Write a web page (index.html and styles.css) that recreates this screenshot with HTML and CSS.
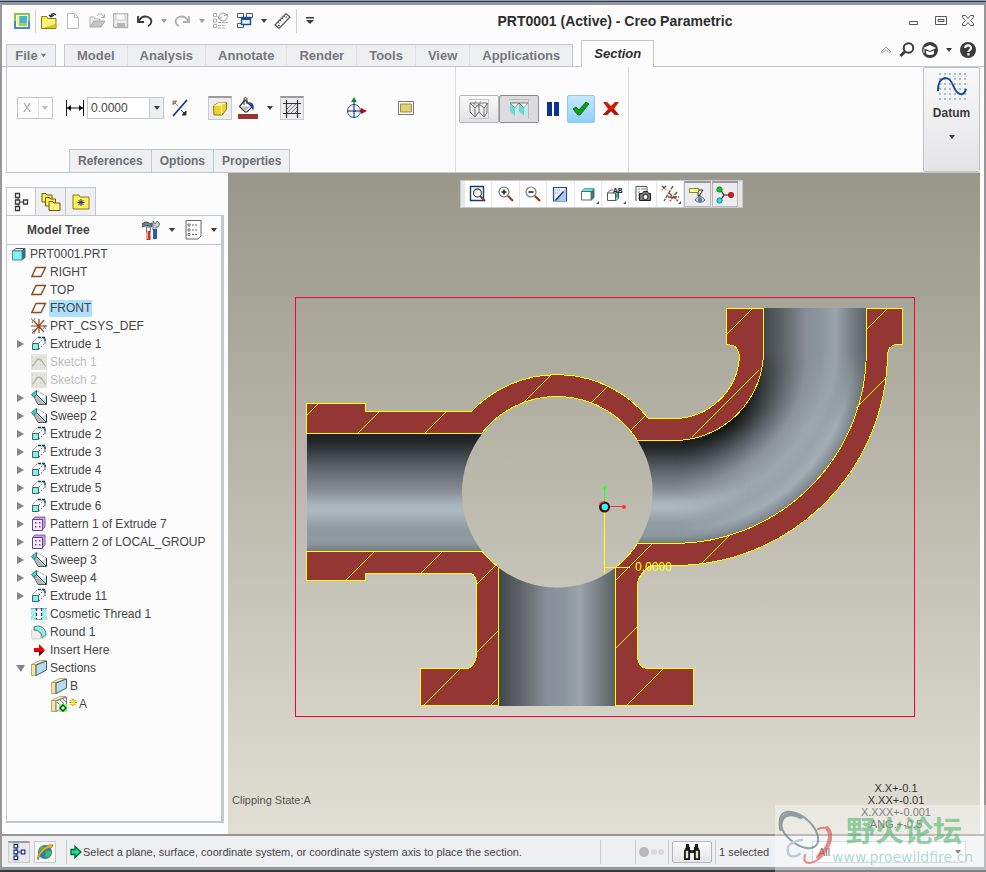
FILE: index.html
```html
<!DOCTYPE html>
<html lang="en">
<head>
<meta charset="utf-8">
<title>PRT0001 (Active) - Creo Parametric</title>
<link rel="stylesheet" href="styles.css">
</head>
<body>
<svg class="defs" aria-hidden="true">
  <symbol id="i-caret" viewBox="0 0 8 8"><path d="M1 2h6L4 6z" fill="currentColor"/></symbol>
  <symbol id="i-plane" viewBox="0 0 16 16"><path d="M5 3.500h9.500L10 12.500H.8z" fill="none" stroke="#8b4a1c" stroke-width="1.400"/></symbol>
  <symbol id="i-extrude" viewBox="0 0 16 16"><path d="M1.500 7.500h6v6h-6z" fill="#7df3f3" stroke="#4b5b60"/><path d="M1.500 6.500l5-5M8 13l6-6M8 7l5-5" stroke="#6b7075" stroke-dasharray="1.500 1.200" fill="none"/><path d="M7 1.500h7v6" fill="none" stroke="#234" stroke-width="1.500" stroke-dasharray="3 1"/><path d="M8 2.500h4" stroke="#5ee"/></symbol>
  <symbol id="i-sketch" viewBox="0 0 16 16"><path d="M0 0h16v16H0z" fill="#e4e4e0"/><path d="M1 3h14M1 7h14M1 11h14M1 14h14" stroke="#c9c9bd" stroke-dasharray="1 3"/><path d="M1 12c3 0 3-7 7-7s4 7 7 7" fill="none" stroke="#b5b5a0" stroke-width="1.300"/></symbol>
  <symbol id="i-sweep" viewBox="0 0 16 16"><path d="M5.500 3l10-.5v12l-10-9z" fill="#fff"/><path d="M3 6l2-1 10 10H8z" fill="#b4b8ba"/><path d="M10 10l5-4v8z" fill="#b5f0f0"/><path d="M6 5l9.500 9.500V6" fill="none" stroke="#333"/><path d="M6 1l9.500 5" fill="none" stroke="#999" stroke-dasharray="2 1"/><path d="M3 7l4 7.500h8.500" fill="none" stroke="#555"/><path d="M.5 4.500L5.500.5V5L2.500 7z" fill="#35dede" stroke="#164b50" stroke-width=".8"/></symbol>
  <symbol id="i-pattern" viewBox="0 0 16 16"><path d="M1 4l3-3h10v10l-3 3z" fill="#c9a0ea" stroke="#7040a0" stroke-width=".8"/><path d="M1.500 3.500h10v11h-10z" fill="#f6eeff" stroke="#654085"/><path d="M4 6h1.500v1.500H4zM8 6h1.500v1.500H8zM4 10h1.500v1.500H4zM8 10h1.500v1.500H8z" fill="#8a2bd0"/></symbol>
  <symbol id="i-thread" viewBox="0 0 16 16"><path d="M0 2h5v12H0zM11 2h5v12h-5z" fill="#8de4ea"/><path d="M0 6l4-4M0 10l5-6M1 14l4-6M11 6l4-4M11 11l5-6M12 14l4-6" stroke="#e9ffff"/><path d="M0 2.500h16" stroke="#8ab"/><path d="M5.500 2v12M10.500 2v12" stroke="#1b2f7a" stroke-dasharray="3 2" stroke-width="1.200"/><path d="M5 13.500h6" stroke="#89a"/></symbol>
  <symbol id="i-round" viewBox="0 0 16 16"><path d="M0 6l6 1 4 3v5H1z" fill="#f0f0e6" stroke="#bbb" stroke-width=".6"/><path d="M3 3c6-3 12 1 12 8l-4 3c0-5-3-8-8-8z" fill="#8ff0f0" stroke="#356" stroke-width=".8"/><path d="M11 14l4-3v2l-4 2z" fill="#ccc9b8"/></symbol>
  <symbol id="i-insert" viewBox="0 0 16 16"><path d="M3 6h5V2l6 6-6 6v-4H3z" fill="#f00000"/><path d="M3 9h10.500L8 14v-4H3z" fill="#8d0000"/></symbol>
  <symbol id="i-section" viewBox="0 0 16 16"><path d="M.5 4.500L9 .5h6L5 4.500z" fill="#fffbd0" stroke="#aa9a50" stroke-width=".8"/><path d="M.5 4.500H5v11H.5z" fill="#f4e6a0" stroke="#a89850" stroke-width=".8"/><path d="M5 5l10.500-4v9L5 15.500z" fill="#b5dcf0" stroke="#3f5e6e"/></symbol>
  <symbol id="i-section-active" viewBox="0 0 16 16"><path d="M.5 4.500L9 .5h6L5 4.500z" fill="#fffbd0" stroke="#aa9a50" stroke-width=".8"/><path d="M.5 4.500H5v11H.5z" fill="#f4e6a0" stroke="#a89850" stroke-width=".8"/><path d="M5 5l10.500-4v9L5 15.500z" fill="#fff" stroke="#777"/><path d="M6 6l7 7M9 4l6 6M12 3l3 3" stroke="#777"/><path d="M8 8h8v8H8z" fill="#8f6"/><path d="M12 9l3 3-3 3-3-3z" fill="#dfd" stroke="#041" stroke-width="1.400"/></symbol>
  <symbol id="i-tree" viewBox="0 0 16 20"><path d="M5 4v12M5 10h6" stroke="currentColor" fill="none"/><path d="M2.500 1.500h4v4h-4zM2.500 8h4v4h-4zM2.500 14.500h4v4h-4zM10.500 8h4v4h-4z" fill="#fff" stroke="currentColor" stroke-width="1.300"/></symbol>
  <symbol id="i-csys" viewBox="0 0 16 16"><path d="M0 8h16M3 3l10 11M13 2L3 14M8 1v14" stroke="#8b4a1c" fill="none" stroke-width="1.200"/><path d="M0 0l2 3M4 0L1 5M12 7l3 4M15 7l-3 4M1 12h3l-3 3h3" stroke="#555" fill="none" stroke-width=".8"/></symbol>
</svg>

<div class="window">
  <header class="titlebar">
    <nav class="quick" aria-label="Quick access">
      <button class="qa" aria-label="Application menu"><svg width="16" height="16" viewBox="0 0 16 16"><path d="M0 0h16v16H0z" fill="#86c64f"/><path d="M0 8h16v8H0z" fill="#4a8ac8"/><path d="M2 2h12v12H2z" fill="#fff"/><path d="M3 3h10v10H3z" fill="#a9cf43"/><path d="M6 3h7v7H6z" fill="#40b5d8"/><path d="M3 3h2v10H3z" fill="#e6ef9b"/></svg></button>
      <span class="sep"></span>
      <button class="qa" aria-label="Working directory"><svg width="18" height="18" viewBox="0 0 18 18"><path d="M1.500 6V4.500h5L8 6.500h8v10H1.500z" fill="#f6ea3c" stroke="#8d7a1e"/><path d="M2 7h13v9H2z" fill="#fff47a"/><path d="M15 14l1 2H3l12-4z" fill="#d8c41e"/><path d="M16 3c-2-2-4-2-5 1M9 3l2 2 3-2" fill="none" stroke="#222" stroke-width="1.200"/></svg></button>
      <button class="qa" aria-label="New"><svg width="14" height="16" viewBox="0 0 14 16"><path d="M1.500.5h7l4 4v11h-11z" fill="#fff" stroke="#bbb"/><path d="M8.500.5v4h4" fill="none" stroke="#bbb"/></svg></button>
      <button class="qa" aria-label="Open"><svg width="17" height="16" viewBox="0 0 17 16"><path d="M1 14V4h4l1 2h5v3" fill="#eee" stroke="#b5b5b5"/><path d="M1 14l4-6h11l-4 6z" fill="#c6c6c6" stroke="#aaa"/><path d="M8 3c2-3 5-3 7 1M15.500 1v3.500H12" fill="none" stroke="#aaa"/></svg></button>
      <button class="qa" aria-label="Save"><svg width="16" height="16" viewBox="0 0 16 16"><path d="M.5.5h14v14H2l-1.500-1z" fill="#eee" stroke="#b3b3b3" stroke-width="1.400"/><path d="M3 1h9v6H3z" fill="#fff" stroke="#c5c5c5"/><path d="M4 10h8v4H4z" fill="#b5b5b5"/></svg></button>
      <button class="qa" aria-label="Undo"><svg width="18" height="14" viewBox="0 0 18 14"><path d="M2 2v6h6M2.500 7.500C5 3 9 2 12 3c5 2 4 7 0 9" fill="none" stroke="#3b3b3b" stroke-width="1.800"/></svg></button>
      <button class="qa-drop dim" aria-label="Undo list"><svg width="8" height="8"><use href="#i-caret"/></svg></button>
      <button class="qa" aria-label="Redo"><svg width="18" height="14" viewBox="0 0 18 14"><path d="M15 2v6H9M14.500 7.500C12 3 8 2 5 3c-5 2-4 7 0 9" fill="none" stroke="#b0b0b0" stroke-width="1.800"/></svg></button>
      <button class="qa-drop dim" aria-label="Redo list"><svg width="8" height="8"><use href="#i-caret"/></svg></button>
      <button class="qa" aria-label="Regenerate"><svg width="18" height="18" viewBox="0 0 18 18"><path d="M1.500 1.500h3v3h-3zM1.500 7h3v3h-3zM1.500 12.500h3v3h-3z" fill="#fff" stroke="#aaa"/><path d="M6 10.500h10M6 13.500h8M6 16h9" stroke="#aaa" stroke-dasharray="3 1"/><path d="M7 5c0-5 7-5 8-1M15 5c0 5-7 5-8 1M6 4l1 3 3-2M16 5l-1-3-3 2" fill="none" stroke="#999"/></svg></button>
      <button class="qa" aria-label="Windows"><svg width="16" height="16" viewBox="0 0 16 16"><path d="M.5.5h6v4h-6zM9.500.5h6v4h-6zM.5 10.500h6v4h-6z" fill="#fff" stroke="#555"/><path d="M4.500 4.500h9v7h-9z" fill="#e8f0ff" stroke="#1d4a9a" stroke-width="1.400"/><path d="M4 5h10v2H4z" fill="#1d4a9a"/></svg></button>
      <button class="qa-drop" aria-label="Window list"><svg width="8" height="8"><use href="#i-caret"/></svg></button>
      <button class="qa" aria-label="Measure"><svg width="18" height="18" viewBox="0 0 18 18"><path d="M1 13L12 1.500l4 3.500L5 16.500z" fill="#fff" stroke="#555" stroke-width="1.200"/><path d="M4 10l1.500 1.500M6 8l1.500 1.500M8 6l1.500 1.500M10 4l1.500 1.500" stroke="#555"/><path d="M4 13.500h2M12 5h1" stroke="#777" stroke-width="1.500"/></svg></button>
      <span class="sep"></span>
      <button class="qa" aria-label="Customize"><svg width="8" height="8" viewBox="0 0 8 8"><path d="M0 0h8v1.500H0zM0 3h8L4 7z" fill="#3b3b3b"/></svg></button>
    </nav>
    <h1 class="title">PRT0001 (Active) - Creo Parametric</h1>
    <div class="win-buttons">
      <button aria-label="Minimize"><svg width="12" height="12" viewBox="0 0 12 12"><path d="M1.500 6.500h8v3h-8z" fill="#fff" stroke="#555"/></svg></button>
      <button aria-label="Maximize"><svg width="12" height="12" viewBox="0 0 12 12"><path d="M.5 1.500h11v8H.5z" fill="#fff" stroke="#555"/><path d="M3 4.500h6v2H3z" fill="#fff" stroke="#555"/></svg></button>
      <button aria-label="Close"><svg width="12" height="12" viewBox="0 0 12 12"><path d="M.5.5h3L6 3.500 8.500.5h3v2L8.500 5.500l3 3v2h-3L6 7.500l-2.500 3h-3v-2l3-3-3-3z" fill="#fff" stroke="#555"/></svg></button>
    </div>
  </header>

  <nav class="tabs" aria-label="Ribbon tabs">
    <button class="tab file">File <svg width="7" height="7"><use href="#i-caret"/></svg></button>
    <div class="tab-set">
      <button class="tab">Model</button><button class="tab">Analysis</button><button class="tab">Annotate</button><button class="tab">Render</button><button class="tab">Tools</button><button class="tab">View</button><button class="tab">Applications</button>
    </div>
    <button class="tab active">Section</button>
    <div class="tab-tools">
      <button aria-label="Collapse ribbon"><svg width="12" height="8" viewBox="0 0 12 8"><path d="M1 6l5-5 5 5H8.500L6 3.500 3.500 6z" fill="#fff" stroke="#999"/></svg></button>
      <button aria-label="Search"><svg width="16" height="16" viewBox="0 0 16 16"><circle cx="9.500" cy="6" r="4.800" fill="#fff" stroke="#3b3b3b" stroke-width="2"/><path d="M6 9.500L1.500 14" stroke="#3b3b3b" stroke-width="3"/></svg></button>
      <button aria-label="Learning"><svg width="16" height="16" viewBox="0 0 16 16"><circle cx="8" cy="8" r="8" fill="#3b3b3b"/><path d="M1 6l7-3 6 3-6 3z" fill="#fff"/><path d="M4 8.500v3c2 2 6 2 8 0v-3L8 10z" fill="#fff"/><path d="M2 7v4" stroke="#fff"/></svg></button>
      <button aria-label="Learning menu"><svg width="8" height="8"><use href="#i-caret"/></svg></button>
      <button aria-label="Help"><svg width="16" height="16" viewBox="0 0 16 16"><circle cx="8" cy="8" r="8" fill="#3b3b3b"/><path d="M5.200 6c0-3.500 5.800-3.500 5.800 0 0 2-2.500 2-2.500 4" fill="none" stroke="#fff" stroke-width="2.200"/><path d="M7.300 11.200h2.300v2.200H7.300z" fill="#fff"/></svg></button>
    </div>
  </nav>

  <section class="ribbon" aria-label="Section dashboard">
    <div class="group settings">
      <div class="tools">
        <label class="combo axis"><select disabled aria-label="Axis"><option>X</option></select><svg width="8" height="8"><use href="#i-caret"/></svg></label>
        <div class="offset">
          <svg width="18" height="18" viewBox="0 0 18 18"><path d="M.5 1v16M17.500 1v16M1 9h16" stroke="#111"/><path d="M1 9l4-3v6zM17 9l-4-3v6z" fill="#111"/></svg>
          <span class="combo value"><input type="text" value="0.0000" aria-label="Offset"><button aria-label="Recent offsets"><svg width="8" height="8"><use href="#i-caret"/></svg></button></span>
        </div>
        <button class="tool" aria-label="Flip"><svg width="18" height="18" viewBox="0 0 18 18"><path d="M2 17L16 1" stroke="#0b2f86" stroke-width="1.600"/><path d="M2 2h4L2 6zM3 3l4 4" fill="#8a8a75" stroke="#8a8a75"/><path d="M15 16h-4l4-4zM14 15l-4-4" fill="#333" stroke="#333"/></svg></button>
        <button class="tool pressed cap" aria-label="Cap"><svg width="16" height="16" viewBox="0 0 16 16"><path d="M1.500 5l5-3.500h8v7L10 14H2z" fill="#f4cf28" stroke="#8c7420" stroke-linejoin="round"/><path d="M2 5h7l5-3.500H6.500z" fill="#fff3a0"/><path d="M9.500 5v8.500" stroke="#fffbd0"/></svg></button>
        <button class="tool paint" aria-label="Hatch color"><svg width="20" height="22" viewBox="0 0 20 22"><path d="M7 3l7 7-5 5H7L1.500 9.500z" fill="#fff" stroke="#333" stroke-width="1.200"/><path d="M3 9.500h9L8 14z" fill="#bbb"/><path d="M6 8V2c0-2 3-2 3 0v5" fill="none" stroke="#333"/><path d="M10 5c5 0 7 4 5 9-1-4-2-6-5-9z" fill="#0c3bd0"/><path d="M0 17h20v5H0z" fill="#963232"/></svg></button>
        <button class="tool drop" aria-label="Hatch colors"><svg width="8" height="8"><use href="#i-caret"/></svg></button>
        <button class="tool pressed" aria-label="Show hatching"><svg width="18" height="18" viewBox="0 0 18 18"><path d="M4 4h10v9H4z" fill="#e9e9e9"/><path d="M4 9l5-5M4 13l9-9M8 13l6-6M12 13l2-2" stroke="#777"/><path d="M3.500 0v18M14.500 0v18M0 3.500h18M0 13.500h18" stroke="#333" stroke-width="1.200"/></svg></button>
        <button class="tool free" aria-label="Enable free positioning"><svg width="22" height="22" viewBox="0 0 22 22"><circle cx="8" cy="14" r="6.500" fill="#eef3ff" stroke="#2a50c8"/><path d="M1 14h16M8 5v16" stroke="#222"/><path d="M8 0l3 5H5z" fill="#128a2c"/><path d="M21 14l-6-3v6z" fill="#9d1010"/><path d="M14 14h4" stroke="#b01010" stroke-width="2"/><path d="M7 13h3v2H7z" fill="#2a50c8"/></svg></button>
        <button class="tool" aria-label="2D view window"><svg width="16" height="14" viewBox="0 0 16 14"><path d="M.5.500h15v13H.5z" fill="#fff" stroke="#777"/><path d="M2.500 3h11v8h-11z" fill="#e0cf78" stroke="#a08d38"/></svg></button>
      </div>
      <div class="panels"><button>References</button><button>Options</button><button>Properties</button></div>
    </div>
    <div class="group confirm">
      <div class="pair">
        <button class="big" aria-label="No preview"><svg width="20" height="20" viewBox="0 0 20 20"><path d="M0 .5h19.500V20M0 19.500h20" fill="none" stroke="#c8c8c8"/><path d="M1 4h17M1 4l5 5v9M1 4v9l5 5 4-5V5L6 9M10 5l5 4 4-5M10 13l5 5V9M15 18l3-4V4" fill="none" stroke="#555" stroke-width=".8"/><path d="M4 4l7 5M7 2l-3 5M12 2l-3 6" fill="none" stroke="#888" stroke-width=".7"/></svg></button>
        <button class="big down" aria-label="Preview"><svg width="20" height="20" viewBox="0 0 20 20"><path d="M0 .5h19.500V20" fill="none" stroke="#bbb"/><path d="M1 4h18l-4 5-5-5-4 5z" fill="#fff" stroke="#555" stroke-width=".8"/><path d="M1 4l5 5v8l-5-5zM10 5l5 4v8l-5-5z" fill="#6fd8d4"/><path d="M6 9l4-4v7l-4 5zM15 9l4-5v8l-4 5z" fill="#b6f2ef"/></svg></button>
      </div>
      <button class="plain" aria-label="Pause"><svg width="12" height="14" viewBox="0 0 12 14"><path d="M0 0h5v14H0zM7 0h5v14H7z" fill="#0c3391"/></svg></button>
      <button class="ok" aria-label="OK"><svg width="18" height="16" viewBox="0 0 18 16"><path d="M1 8l3-2 3 3 7-8 3 2L8 14H6z" fill="#0aa00a" stroke="#046004" stroke-width=".8"/></svg></button>
      <button class="plain" aria-label="Cancel"><svg width="16" height="16" viewBox="0 0 16 16"><path d="M0 1h4l4 4 4-4h4l-5 7 5 6h-4l-4-4-4 4H0l5-6z" fill="#d11b05"/><path d="M11 8l5 6h-4l-4-4-4 4H0l4-4 4-1z" fill="#b01500"/></svg></button>
    </div>
    <button class="datum"><svg width="30" height="28" viewBox="0 0 30 28"><path d="M2 1h28M2 6h28M2 11h28M2 16h28M2 21h28M2 26h28" stroke="#a9bcc8" stroke-width="2" stroke-dasharray="2 3"/><path d="M1 18C1 2 12 2 16 12c4 11 11 12 13 4" fill="none" stroke="#174a9c" stroke-width="2"/></svg><span>Datum</span><svg width="8" height="8"><use href="#i-caret"/></svg></button>
  </section>

  <main class="workspace">
    <aside class="sidebar">
      <div class="side-tabs">
        <button class="current" aria-label="Model tree"><svg width="16" height="20"><use href="#i-tree"/></svg></button>
        <button aria-label="Folder browser"><svg width="20" height="20" viewBox="0 0 20 20"><path d="M1 3V1.500h4L6 3h5v7H1z" fill="#ffef56" stroke="#6b5c14"/><path d="M4.500 7V5.500h4L9.500 7h5v7h-10z" fill="#ffef56" stroke="#6b5c14"/><path d="M8 11V9.500h4l1 1.500h6v7.500H8z" fill="#fff27c" stroke="#6b5c14"/></svg></button>
        <button aria-label="Favorites"><svg width="18" height="16" viewBox="0 0 18 16"><path d="M1 3V1h6l1 2h9v12H1z" fill="#fff056" stroke="#8a7a20"/><path d="M9 5v7M5.500 8.500h7M6.500 6l5 5M11.500 6l-5 5" stroke="#14308a"/></svg></button>
      </div>
      <div class="panel">
        <div class="panel-head">
          <h2>Model Tree</h2>
          <button aria-label="Settings"><svg width="18" height="20" viewBox="0 0 18 20"><path d="M0 4c3-3 7-2 8 0l2-1v4L8 6H4c-2 0-3 1-4 1z" fill="#5f8b98" stroke="#234" stroke-width=".8"/><path d="M4.500 7h4v5h-4z" fill="#eee" stroke="#777"/><path d="M4.500 11h4v9h-4z" fill="#c43a20"/><path d="M5 11h1v8H5z" fill="#f0a890"/><path d="M11 1l2 3 2-3 3 3-2 3h-2v3h-3V6z" fill="#ccd0d3" stroke="#555" stroke-width=".8"/><path d="M11 9h4v10h-4z" fill="#265cb5"/></svg></button>
          <button class="narrow" aria-label="Settings menu"><svg width="8" height="8"><use href="#i-caret"/></svg></button>
          <button aria-label="Show"><svg width="17" height="20" viewBox="0 0 17 20"><path d="M1 .5h15v15.500l-3 3H1z" fill="#fff" stroke="#666"/><path d="M7 5h6M7 10h6M7 14.500h6" stroke="#666" stroke-dasharray="2 1"/><path d="M3 4h2v2H3zM3 9h2v2H3zM3 13.500h2v2H3z" fill="#fff" stroke="#555" stroke-width=".8"/></svg></button>
          <button class="narrow" aria-label="Show menu"><svg width="8" height="8"><use href="#i-caret"/></svg></button>
        </div>
        <ul class="tree">
          <li class="root"><svg width="16" height="16" viewBox="0 0 16 16"><path d="M1.500 5L5 2.500h9L11 5z" fill="#e5ffff" stroke="#456"/><path d="M11 5l3-2.500v9L11 14z" fill="#277a85" stroke="#456"/><path d="M1.500 5H11v9H1.500z" fill="#7df3f3" stroke="#5a8a90"/></svg><span>PRT0001.PRT</span></li>
          <li><i></i><svg><use href="#i-plane"/></svg><span>RIGHT</span></li>
          <li><i></i><svg><use href="#i-plane"/></svg><span>TOP</span></li>
          <li class="selected"><i></i><svg><use href="#i-plane"/></svg><span>FRONT</span></li>
          <li><i></i><svg><use href="#i-csys"/></svg><span>PRT_CSYS_DEF</span></li>
          <li><i class="closed"></i><svg><use href="#i-extrude"/></svg><span>Extrude 1</span></li>
          <li class="off"><i></i><svg><use href="#i-sketch"/></svg><span>Sketch 1</span></li>
          <li class="off"><i></i><svg><use href="#i-sketch"/></svg><span>Sketch 2</span></li>
          <li><i class="closed"></i><svg><use href="#i-sweep"/></svg><span>Sweep 1</span></li>
          <li><i class="closed"></i><svg><use href="#i-sweep"/></svg><span>Sweep 2</span></li>
          <li><i class="closed"></i><svg><use href="#i-extrude"/></svg><span>Extrude 2</span></li>
          <li><i class="closed"></i><svg><use href="#i-extrude"/></svg><span>Extrude 3</span></li>
          <li><i class="closed"></i><svg><use href="#i-extrude"/></svg><span>Extrude 4</span></li>
          <li><i class="closed"></i><svg><use href="#i-extrude"/></svg><span>Extrude 5</span></li>
          <li><i class="closed"></i><svg><use href="#i-extrude"/></svg><span>Extrude 6</span></li>
          <li><i class="closed"></i><svg><use href="#i-pattern"/></svg><span>Pattern 1 of Extrude 7</span></li>
          <li><i class="closed"></i><svg><use href="#i-pattern"/></svg><span>Pattern 2 of LOCAL_GROUP</span></li>
          <li><i class="closed"></i><svg><use href="#i-sweep"/></svg><span>Sweep 3</span></li>
          <li><i class="closed"></i><svg><use href="#i-sweep"/></svg><span>Sweep 4</span></li>
          <li><i class="closed"></i><svg><use href="#i-extrude"/></svg><span>Extrude 11</span></li>
          <li><i></i><svg><use href="#i-thread"/></svg><span>Cosmetic Thread 1</span></li>
          <li><i></i><svg><use href="#i-round"/></svg><span>Round 1</span></li>
          <li><i></i><svg><use href="#i-insert"/></svg><span>Insert Here</span></li>
          <li><i class="open"></i><svg><use href="#i-section"/></svg><span>Sections</span></li>
          <li class="deep"><svg><use href="#i-section"/></svg><span>B</span></li>
          <li class="deep"><svg><use href="#i-section-active"/></svg><svg class="spark" viewBox="0 0 8 16"><path d="M4 3v7M.5 6.500h7M1.500 4l5 5M6.500 4l-5 5" stroke="#776a00"/><path d="M2 4.500h4v4H2z" fill="#fff200"/></svg><span>A</span></li>
        </ul>
      </div>
    </aside>

    <div class="canvas">
      <svg class="model" viewBox="228 173 752 661" role="img" aria-label="Pipe fitting cross-section">
        <defs>
          <linearGradient id="g-h" x1="0" y1="434" x2="0" y2="551" gradientUnits="userSpaceOnUse">
            <stop offset="0" stop-color="#1d2021"/><stop offset=".07" stop-color="#24282a"/><stop offset=".28" stop-color="#5c6269"/><stop offset=".49" stop-color="#888f99"/><stop offset=".6" stop-color="#a9b3bc"/><stop offset=".66" stop-color="#aeb8c0"/><stop offset=".81" stop-color="#8f9aa1"/><stop offset=".93" stop-color="#8d979e"/><stop offset="1" stop-color="#747d83"/>
          </linearGradient>
          <linearGradient id="g-h2" x1="0" y1="441" x2="0" y2="543" gradientUnits="userSpaceOnUse">
            <stop offset="0" stop-color="#1d2021"/><stop offset=".07" stop-color="#24282a"/><stop offset=".28" stop-color="#5c6269"/><stop offset=".49" stop-color="#888f99"/><stop offset=".6" stop-color="#a9b3bc"/><stop offset=".66" stop-color="#aeb8c0"/><stop offset=".81" stop-color="#8f9aa1"/><stop offset=".93" stop-color="#8d979e"/><stop offset="1" stop-color="#747d83"/>
          </linearGradient>
          <linearGradient id="g-v" x1="499" y1="0" x2="615" y2="0" gradientUnits="userSpaceOnUse">
            <stop offset="0" stop-color="#42484a"/><stop offset=".18" stop-color="#5f6368"/><stop offset=".42" stop-color="#898f9a"/><stop offset=".56" stop-color="#8b959d"/><stop offset=".7" stop-color="#9aa4ab"/><stop offset=".85" stop-color="#788187"/><stop offset="1" stop-color="#5b6368"/>
          </linearGradient>
          <linearGradient id="g-v2" x1="764" y1="0" x2="866" y2="0" gradientUnits="userSpaceOnUse">
            <stop offset="0" stop-color="#42484a"/><stop offset=".18" stop-color="#5f6368"/><stop offset=".42" stop-color="#898f9a"/><stop offset=".56" stop-color="#8b959d"/><stop offset=".7" stop-color="#9aa4ab"/><stop offset=".85" stop-color="#788187"/><stop offset="1" stop-color="#5b6368"/>
          </linearGradient>
          <radialGradient id="g-ra" cx="674" cy="351" r="192" gradientUnits="userSpaceOnUse">
            <stop offset=".469" stop-color="#42484a"/><stop offset=".565" stop-color="#5f6368"/><stop offset=".692" stop-color="#898f9a"/><stop offset=".766" stop-color="#8b959d"/><stop offset=".841" stop-color="#9aa4ab"/><stop offset=".92" stop-color="#788187"/><stop offset="1" stop-color="#5b6368"/>
          </radialGradient>
          <radialGradient id="g-rb" cx="674" cy="351" r="192" gradientUnits="userSpaceOnUse">
            <stop offset=".469" stop-color="#1d2021"/><stop offset=".506" stop-color="#24282a"/><stop offset=".618" stop-color="#5c6269"/><stop offset=".729" stop-color="#888f99"/><stop offset=".788" stop-color="#a9b3bc"/><stop offset=".82" stop-color="#aeb8c0"/><stop offset=".9" stop-color="#8f9aa1"/><stop offset=".963" stop-color="#8d979e"/><stop offset="1" stop-color="#747d83"/>
          </radialGradient>
          <radialGradient id="g-rc" cx="674" cy="351" r="192" gradientUnits="userSpaceOnUse">
            <stop offset=".469" stop-color="#080a0b"/><stop offset=".5" stop-color="#202425"/><stop offset=".6" stop-color="#5c6269"/><stop offset=".7" stop-color="#8b949d"/><stop offset=".8" stop-color="#9ca7ae"/><stop offset=".87" stop-color="#98a3ab"/><stop offset=".93" stop-color="#a3adb5"/><stop offset="1" stop-color="#7a8389"/>
          </radialGradient>
          <linearGradient id="m-a" x1="0" y1="425" x2="0" y2="351" gradientUnits="userSpaceOnUse"><stop offset="0" stop-color="#000"/><stop offset="1" stop-color="#fff"/></linearGradient>
          <linearGradient id="m-b" x1="676" y1="0" x2="750" y2="0" gradientUnits="userSpaceOnUse"><stop offset="0" stop-color="#fff"/><stop offset="1" stop-color="#000"/></linearGradient>
          <mask id="mask-a" maskUnits="userSpaceOnUse" x="600" y="300" width="300" height="260"><path d="M600 300h300v260H600z" fill="url(#m-a)"/></mask>
          <mask id="mask-b" maskUnits="userSpaceOnUse" x="600" y="300" width="300" height="260"><path d="M600 300h300v260H600z" fill="url(#m-b)"/></mask>
        </defs>

        <path d="M307 434H482A95.500 95.500 0 0 0 482 551H307z" fill="url(#g-h)"/>
        <path d="M499 568A95.500 95.500 0 0 0 615 568V706H499z" fill="url(#g-v)"/>
        <path d="M764 308h102.500v43H764z" fill="url(#g-v2)"/>
        <path d="M637.500 440.500H674v103h-36.500A95.500 95.500 0 0 0 637.500 440.500z" fill="url(#g-h2)"/>
        <path d="M866.500 351A192.500 192.500 0 0 1 674 543.500V440.500A89.500 89.500 0 0 0 763.500 351z" fill="url(#g-rc)"/>
        <path d="M866.500 351A192.500 192.500 0 0 1 674 543.500V440.500A89.500 89.500 0 0 0 763.500 351z" fill="url(#g-ra)" mask="url(#mask-a)"/>
        <path d="M866.500 351A192.500 192.500 0 0 1 674 543.500V440.500A89.500 89.500 0 0 0 763.500 351z" fill="url(#g-rb)" mask="url(#mask-b)"/>

        <g class="cut">
          <path d="M306.500 403.500h59v8h106A117.500 117.500 0 0 1 648.500 418.500H674A66 66 0 0 0 739.500 357.500Q739 348 733 345.500L726.500 344.500V308.500h37V351A89.500 89.500 0 0 1 674 440.500H637.500A95.500 95.500 0 0 0 481.500 433.500H306.500z"/>
          <path d="M866.500 308.500h36v36h-7Q888 346 887.500 355A213.500 213.500 0 0 1 674 565.500H650.500Q640 573 637.500 582.500V658.500Q639 667 646 668.500H693.500V705.500H615.500V567.500A95.500 95.500 0 0 0 637.500 543.500H674A192.500 192.500 0 0 0 866.500 351z"/>
          <path d="M306.500 551.500h175.500A95.500 95.500 0 0 0 498.500 567.500V705.500H420.500V668.500H468.500Q475 665 476.500 656.500V583.500Q476 576 471.500 573.500H365.500v7h-59z"/>
        </g>
        <g class="hatch">
          <path d="M307 415l12-12M358 433l21-21M425 433l21-21M524 402l27-27M592 402l16-16M630 431l16-16M692 437l67-67M727 334l25-25M867 329l20-20M856 408l29-29M702 563l29-29M616 580l36-36M616 648l21-21M627 705l36-36M346 580l28-28M421 573l21-21M477 584l20-20M477 652l21-21M424 705l36-36M491 705l7-7"/>
        </g>
        <path class="clip" d="M295.500 297.500h619v419h-619z"/>

        <path d="M604.500 511v62M604 567.500h26" stroke="#ff0" fill="none"/>
        <path d="M604.500 503v-15" stroke="#2f3"/><circle cx="604.500" cy="488" r="2" fill="#3f3"/>
        <path d="M609 506.500h15" stroke="#f33"/><circle cx="624" cy="507" r="2" fill="#f33"/>
        <circle cx="604.500" cy="507" r="5.500" fill="#4a0a0c"/><path d="M600 504a5 5 0 0 1 4-2" stroke="#e22" stroke-width="1.500" fill="none"/><circle cx="604.800" cy="507" r="3.200" fill="#2ff"/>
        <text class="dim-text" x="635" y="571">0.0000</text>
      </svg>

      <div class="view-bar" role="toolbar" aria-label="View">
        <button aria-label="Refit"><svg viewBox="0 0 18 18"><path d="M1.500 1.500h13v14h-13z" fill="#fff" stroke="#123a86" stroke-width="1.400"/><circle cx="8.500" cy="8" r="4" fill="#f4f4ee" stroke="#555" stroke-width="1.300"/><path d="M11 11l5 5" stroke="#7a4520" stroke-width="2"/></svg></button>
        <button aria-label="Zoom in"><svg viewBox="0 0 18 18"><circle cx="7" cy="7" r="5" fill="#fff" stroke="#777" stroke-width="1.200"/><path d="M4.500 7h5M7 4.500v5" stroke="#222" stroke-width="1.600"/><path d="M11 11l5 5" stroke="#7a4520" stroke-width="2.200"/></svg></button>
        <button aria-label="Zoom out"><svg viewBox="0 0 18 18"><circle cx="7" cy="7" r="5" fill="#fff" stroke="#777" stroke-width="1.200"/><path d="M4.500 7h5" stroke="#222" stroke-width="1.600"/><path d="M11 11l5 5" stroke="#7a4520" stroke-width="2.200"/></svg></button>
        <button aria-label="Repaint"><svg viewBox="0 0 18 18"><path d="M2.500 2.500h13v13.500h-13z" fill="#e5efff" stroke="#234a90" stroke-width="1.200"/><path d="M15 3v13H3z" fill="#a9c8ee"/><path d="M4 15l8-9 1 1-8 9z" fill="#1c3560"/><path d="M4 5h6M4 8h4" stroke="#99a" stroke-dasharray="1 1"/></svg></button>
        <button class="more" aria-label="Display style"><svg viewBox="0 0 18 18"><path d="M2.500 6.500l3-3H15v9l-3 3" fill="#277a85" stroke="#666"/><path d="M2.500 6.500l3-3H15l-3 3z" fill="#5fe8e8"/><path d="M2.500 6.500H12v8.500H2.500z" fill="#fff" stroke="#666"/></svg></button>
        <button class="more" aria-label="Saved orientations"><svg viewBox="0 0 18 18"><path d="M1.500 8l3-3H7M1.500 8v7.500h8V8zM9.500 8l3-1v6l-3 3" fill="#fff" stroke="#555"/><path d="M10 9l2-2v5l-2 2z" fill="#3aa"/><text x="7" y="8" class="ab">AB</text></svg></button>
        <button aria-label="View manager"><svg viewBox="0 0 18 18"><path d="M2 16V1.500h11V7" fill="#fff" stroke="#555"/><path d="M4 4h2M7 4h5M4 7h2M4 10h2M4 13h2" stroke="#777"/><path d="M5.500 8.500h3l1-2h4l1 2h2v7h-11z" fill="#777" stroke="#222"/><circle cx="11.500" cy="12" r="2.500" fill="#fff" stroke="#222"/></svg></button>
        <button class="more" aria-label="Datum display"><svg viewBox="0 0 18 18"><path d="M1 1l4 4M5 1L1 5M12 1L3 16M8 8l9 8M16 7l-7 9M7 12h11" stroke="#7e4528" stroke-width="1.400" stroke-dasharray="4 1" fill="none"/></svg></button>
        <button class="on" aria-label="Annotation display"><svg viewBox="0 0 18 18"><path d="M1.500 2.500h9v4h-9z" fill="#ffffa0" stroke="#8b8b20"/><path d="M11 4h4l-4 6M10 7v3h3" fill="none" stroke="#222"/><path d="M7 14c2-4 8-4 10 0-2 3-8 3-10 0z" fill="#ddd" stroke="#666"/><circle cx="12" cy="14" r="2.200" fill="#4a7fb5"/></svg></button>
        <button class="on" aria-label="Spin center"><svg viewBox="0 0 18 18"><path d="M4 3l4 6-4 6M8 9h7" fill="none" stroke="#222" stroke-width="1.200"/><circle cx="3.500" cy="3.500" r="2.700" fill="#1ec41e" stroke="#0a500a" stroke-width=".6"/><circle cx="3.500" cy="14.500" r="2.700" fill="#2fd8e8" stroke="#0a5058" stroke-width=".6"/><circle cx="15" cy="9" r="2.700" fill="#e81818" stroke="#600" stroke-width=".6"/></svg></button>
      </div>

      <p class="clip-state">Clipping State:A</p>
      <p class="tolerance">X.X+-0.1<br>X.XX+-0.01<br>X.XXX+-0.001<br>ANG.+-0.5</p>
    </div>
  </main>

  <footer class="status">
    <button class="st-btn on blue" aria-label="Toggle navigator"><svg width="16" height="18" viewBox="0 0 16 20"><use href="#i-tree"/></svg></button>
    <button class="st-btn" aria-label="Toggle browser"><svg width="18" height="18" viewBox="0 0 18 18"><circle cx="9" cy="9" r="7" fill="#2a7fc4"/><path d="M4 4c3-2 5 0 5 2s-3 2-4 4-3-2-1-6zM10 8c3-2 5 0 5 2s-3 5-5 4 0-3 0-6z" fill="#3fc04a"/><path d="M2 17C-1 12 10 0 17 2c0 1-1 2-2 3C10 4 3 12 2 17z" fill="#f0b428" stroke="#8a5a08" stroke-width=".6"/></svg></button>
    <span class="st-sep"></span>
    <p class="message"><svg width="12" height="14" viewBox="0 0 12 14"><path d="M1 4.500h4V1.500L11 7l-6 5.500v-3H1z" fill="#17e08a" stroke="#063" stroke-width="1.300"/></svg>Select a plane, surface, coordinate system, or coordinate system axis to place the section.</p>
    <span class="st-sep"></span>
    <span class="blank"></span>
    <span class="st-sep"></span>
    <svg class="lights" width="28" height="12" viewBox="0 0 28 12"><circle cx="6" cy="6" r="5" fill="#b9b9b9"/><circle cx="16" cy="6" r="3" fill="#d9d9d9"/><circle cx="23" cy="6" r="3" fill="#d9d9d9"/></svg>
    <span class="st-sep"></span>
    <button class="find" aria-label="Find"><svg width="18" height="16" viewBox="0 0 18 16"><path d="M3 0h3v3h1v3h4V3h1V0h3v3l2 4v9h-6V9H7v7H1V7l2-4z" fill="#1a1a1a"/><path d="M3 7h2v7H3zM13 7h2v7h-2zM8 7h2" fill="#f4f4dc" stroke="#bbb" stroke-width=".5"/></svg></button>
    <span class="st-sep"></span>
    <span class="count">1 selected</span>
    <label class="combo filter"><select aria-label="Selection filter"><option>All</option></select><svg width="8" height="8"><use href="#i-caret"/></svg></label>
  </footer>
</div>

<div class="watermark">
  <svg width="62" height="60" viewBox="0 0 62 60"><g fill="none" stroke-linecap="round"><ellipse cx="23" cy="21" rx="13" ry="23" transform="rotate(-48 23 21)" stroke="#5f7380" stroke-width="2"/><path d="M5 20C2 6 14 2 25 8" stroke="#5f7380" stroke-width="4"/><path d="M42 20c16-6 16 10 7 23-8 12-24 16-20 3" stroke="#d85050" stroke-width="2"/><path d="M51 19c7 8 1 21-9 29" stroke="#d85050" stroke-width="4"/><path d="M26 31c-9 1-16 5-14 12 1 6 8 5 12 2" stroke="#a5b5d8" stroke-width="2.500"/></g></svg>
  <div><strong lang="zh">野火论坛</strong><span>www.proewildfire.cn</span></div>
</div>
</body>
</html>
```

FILE: styles.css
```css
* { box-sizing: border-box; }

body {
  margin: 0;
  min-height: 100vh;
  display: flex;
  flex-direction: column;
  position: relative;
  padding: 1px 0 2px;
  border-top: 1px solid #7ea8d4;
  background: #35383c;
  font: 12px/18px "Liberation Sans", Arial, sans-serif;
  color: #444;
}

h1, h2, p, ul { margin: 0; padding: 0; }
svg { display: block; flex: none; }
.defs { position: absolute; width: 0; height: 0; }

button {
  margin: 0;
  padding: 0;
  border: 0;
  background: none;
  font: inherit;
  color: #3b3b3b;
  display: flex;
  align-items: center;
  justify-content: center;
}

.window {
  flex: 1;
  display: flex;
  flex-direction: column;
  border: solid #979797;
  border-width: 3px 2px;
  background: #fcfcfc;
}

/* Title bar */
.titlebar {
  display: flex;
  align-items: center;
  height: 31px;
}
.quick { flex: none; display: flex; align-items: center; padding-left: 8px; }
.qa { flex: none; width: 24px; height: 24px; }
.qa-drop { flex: none; width: 14px; height: 24px; }
.dim { color: #999; }
.sep { flex: none; width: 1px; height: 24px; margin: 0 1px; background: #d0d0d0; }
.title {
  flex: 1;
  text-align: center;
  font-size: 14px;
  font-weight: bold;
  color: #2e2e2e;
}
.win-buttons { display: flex; gap: 15px; padding: 0 10px 0 0; }

/* Ribbon tabs */
.tabs {
  display: flex;
  align-items: flex-end;
  height: 31px;
  padding: 0 4px;
  box-shadow: inset 0 -1px #c3c7cd;
}
.tab {
  height: 23px;
  padding: 0 12px;
  font-size: 13px;
  font-weight: bold;
  color: #77777d;
}
.tab.file, .tab-set {
  border: 1px solid #c3c7cd;
  background: #eeeff1;
}
.tab.file { width: 50px; gap: 2px; padding: 0; margin-right: 8px; }
.tab-set { display: flex; height: 23px; margin-right: 8px; }
.tab-set .tab { height: 21px; border-left: 1px solid #dfe1e4; }
.tab-set .tab:first-child { border-left: 0; }
.tab.active {
  height: 27px;
  border: 1px solid #c3c7cd;
  border-bottom: 0;
  background: #fcfcfc;
  color: #2e2e2e;
  font-style: italic;
}
.tab-tools {
  margin-left: auto;
  display: flex;
  align-items: center;
  gap: 7px;
  height: 35px;
  padding-right: 4px;
}

/* Ribbon */
.ribbon {
  display: flex;
  height: 106px;
  margin: 0 4px;
  border-left: 1px solid #c3c7cd;
  border-bottom: 1px solid #c3c7cd;
}
.group { border-right: 1px solid #dadcdf; }
.settings { width: 449px; display: flex; flex-direction: column; justify-content: space-between; }
.tools { display: flex; align-items: center; height: 82px; padding-left: 10px; }
.tool { height: 24px; min-width: 24px; }
.pressed {
  border: 1px solid #c9c9cb;
  border-top: 2px solid #9c9c9e;
  background: #ececee;
}
.combo {
  display: flex;
  align-items: center;
  height: 22px;
  border: 1px solid #c3c7cd;
  background: #fff;
  position: relative;
}
.combo select {
  appearance: none;
  width: 100%;
  height: 100%;
  padding: 0 18px 0 5px;
  border: 0;
  background: none;
  font: inherit;
  color: #444;
}
.combo > svg { position: absolute; right: 3px; }
.combo.axis { width: 36px; background: #fcfcfc; color: #bbb; }
.combo.axis select { color: #777; background: linear-gradient(#d5d8db, #d5d8db) 20px 0 / 1px 100% no-repeat; }
.offset { display: flex; align-items: center; gap: 3px; margin: 0 4px 0 13px; }
.combo.value { width: 77px; }
.combo.value input {
  width: 61px;
  height: 20px;
  padding: 0 3px;
  border: 0;
  background: none;
  font: inherit;
  color: #444;
}
.combo.value button { width: 14px; height: 20px; border-left: 1px solid #c3c7cd; background: #eeeff1; }
.cap { margin-left: 16px; }
.paint { margin-left: 4px; }
.drop { min-width: 20px; }
.free { margin: 0 25px 0 41px; }
.panels { display: flex; padding-left: 62px; }
.panels button {
  height: 23px;
  padding: 0 8px;
  border: solid #c3c7cd;
  border-width: 1px 1px 0;
  background: #eeeff1;
  font-weight: bold;
  color: #6e6e74;
}
.panels button + button { border-left-width: 0; }
.confirm { display: flex; gap: 8px; align-items: center; width: 173px; height: 105px; padding: 0 3px 22px; }
.pair { display: flex; }
.big {
  width: 40px;
  height: 28px;
  border: 1px solid #b5b5b7;
  border-radius: 2px;
  background: linear-gradient(#fafafa, #e2e2e4);
}
.big.down { border-color: #8e8e90; background: #dcdcde; }
.ok {
  width: 28px;
  height: 28px;
  border: 1px solid #8cc8f0;
  border-radius: 2px;
  background: linear-gradient(#c5e7fd, #8fd0fa);
}
.plain { height: 28px; }
.datum {
  flex-direction: column;
  justify-content: flex-start;
  gap: 3px;
  width: 57px;
  margin-left: auto;
  padding-top: 5px;
  border: 1px solid #bfc2c7;
  border-radius: 2px;
  background: linear-gradient(#f8f8f9, #e4e4e6);
  font-weight: bold;
}
.datum span { margin-bottom: 8px; }

/* Workspace */
.workspace { flex: 1; display: flex; padding-right: 4px; }
.sidebar {
  display: flex;
  flex-direction: column;
  width: 226px;
  padding: 14px 4px 11px;
}
.side-tabs { display: flex; height: 28px; }
.side-tabs button {
  width: 30px;
  border: 1px solid #c3c7cd;
  border-width: 1px 1px 0 0;
  background: #eeeff1;
}
.side-tabs .current { border-left-width: 1px; background: #fcfcfc; }
.panel {
  flex: 1;
  border: solid #c3c8cd;
  border-width: 1px 3px 2px 1px;
}
.panel-head {
  display: flex;
  align-items: center;
  gap: 3px;
  height: 29px;
  padding-left: 20px;
  border-bottom: 1px solid #c3c7cd;
}
.panel-head h2 { flex: 1; font-size: 12px; }
.panel-head button { width: 22px; }
.panel-head .narrow { width: 14px; }
.tree { list-style: none; }
.tree li {
  display: flex;
  align-items: center;
  gap: 3px;
  height: 18px;
  padding-left: 9px;
}
.tree .root { padding-left: 4px; }
.tree .deep { padding-left: 44px; }
.tree li svg { width: 16px; height: 16px; }
.tree li .spark { width: 8px; margin: 0 -1px 0 -1px; }
.tree li i { width: 12px; height: 8px; background: none; }
.tree li .closed, .tree li .open { background: #858585; }
.tree .closed { clip-path: polygon(1px 0, 8px 4px, 1px 8px); }
.tree .open { clip-path: polygon(0 1px, 9px 1px, 5px 8px); }
.tree .off { color: #bdbdbd; }
.tree .selected span { background: #aee0fb; box-shadow: -1px 0 #aee0fb, 1px 0 #aee0fb; height: 17px; line-height: 17px; }

/* Graphics area */
.canvas {
  flex: 1;
  position: relative;
  min-width: 0;
  background: linear-gradient(#99978a, #e1dfd3);
}
.model { position: absolute; inset: 0; width: 100%; height: 100%; }
.cut path { fill: #943634; stroke: #ff0; shape-rendering: crispEdges; }
.hatch path { fill: none; stroke: #ff0; stroke-width: 1; shape-rendering: crispEdges; }
.clip { fill: none; stroke: #f80038; shape-rendering: crispEdges; }
.dim-text { fill: #ff0; font-size: 12px; }
.ab { font: bold 8px "Liberation Mono", monospace; fill: #222; }

.view-bar {
  position: absolute;
  top: 7px;
  left: 0;
  right: 5px;
  display: grid;
  grid-template-columns: repeat(10, 1fr);
  gap: 1px;
  width: 283px;
  height: 28px;
  margin: 0 auto;
  padding: 0 4px;
  border: 1px solid #c8cad0;
  background: #e4e6ea;
}
.view-bar button { background: #fff; position: relative; }
.view-bar svg { width: 18px; height: 18px; }
.view-bar .on {
  border: 1px solid #b8b8ba;
  border-top: 2px solid #98989a;
  background: #ececee;
}
.view-bar .more::after {
  content: "";
  position: absolute;
  right: 2px;
  bottom: 3px;
  border: solid transparent;
  border-width: 3px 0 0 3px;
  border-right: 3px solid #555;
  border-left: 0;
}

.clip-state { position: absolute; left: 4px; bottom: 25px; font-size: 11px; color: #555; }
.tolerance {
  position: absolute;
  right: 49px;
  bottom: 4px;
  font-size: 11px;
  line-height: 12px;
  text-align: center;
  color: #333;
}

/* Status bar */
.status {
  display: flex;
  align-items: center;
  height: 33px;
  padding: 0 4px 0 6px;
  border-top: 2px solid #979797;
  background: #eeeff1;
}
.st-btn {
  width: 22px;
  height: 22px;
  margin-right: 4px;
  border: 1px solid #c9cacd;
  background: #f8f8f9;
}
.st-btn.on { border-top: 2px solid #9c9c9e; background: #e8e8ea; }
.blue { color: #10307c; }
.st-sep { flex: none; width: 1px; height: 24px; background: #c9cacd; }
.st-btn + .st-sep { margin-left: 6px; }
.message { flex: 1; display: flex; align-items: center; gap: 1px; padding-left: 3px; font-size: 11px; }
.blank { width: 34px; }
.lights { margin: 0 2px; }
.find {
  width: 40px;
  height: 22px;
  margin: 0 3px;
  border: 1px solid #b5b7ba;
  border-radius: 2px;
  background: linear-gradient(#fafafa, #e6e6e8);
}
.count { width: 96px; padding-left: 3px; font-size: 11px; }
.combo.filter { width: 154px; margin-right: 14px; }
.filter select { font-size: 11px; color: #222; }

.watermark {
  position: absolute;
  right: 0;
  bottom: 0;
  display: flex;
  align-items: center;
  width: 211px;
  height: 67px;
  padding-left: 1px;
  background: rgba(255, 255, 255, 0.36);
  pointer-events: none;
}
.watermark svg { opacity: 0.65; }
.watermark div { margin-left: -6px; display: flex; flex-direction: column; }
.watermark strong {
  padding-left: 14px;
  font: bold 29px/36px "Noto Sans CJK SC", sans-serif;
  color: rgba(84, 178, 110, 0.62);
}
.watermark span {
  font: 14px/20px "DejaVu Sans", sans-serif;
  color: rgba(140, 205, 205, 0.75);
}
```
